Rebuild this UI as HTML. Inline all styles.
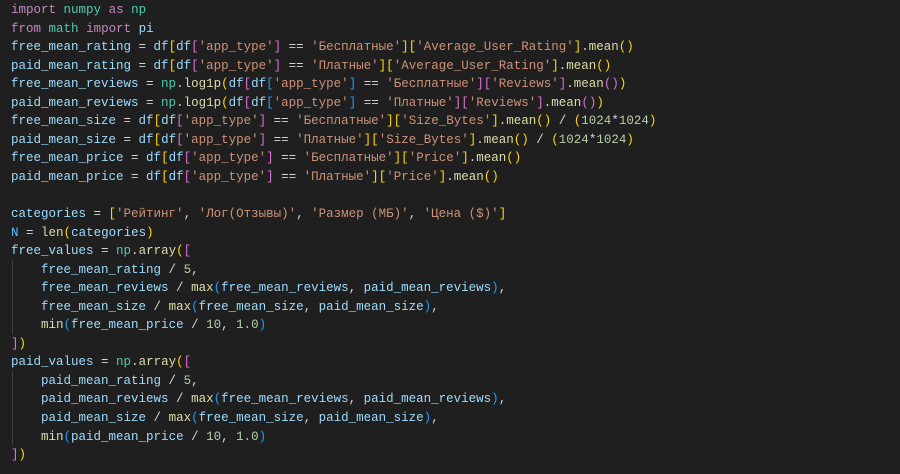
<!DOCTYPE html>
<html><head><meta charset="utf-8"><style>
html,body{margin:0;padding:0;background:#1f1f1f;width:900px;height:474px;overflow:hidden}
pre{margin:0;position:absolute;left:11px;top:1px;font-family:"Liberation Mono","DejaVu Sans Mono",monospace;font-size:12.5px;line-height:18.55px;color:#d4d4d4;white-space:pre}
.k{color:#c586c0}.m{color:#4ec9b0}.v{color:#9cdcfe}.s{color:#ce9178}.f{color:#dcdcaa}.n{color:#b5cea8}.c{color:#4fc1ff}
.b1{color:#ffd700}.b2{color:#da70d6}.b3{color:#179fff}
.g{position:absolute;left:12px;width:1px;background:#404040}
</style></head><body>
<div class="g" style="top:260px;height:74px"></div>
<div class="g" style="top:371px;height:74px"></div>
<pre><span class="k">import</span> <span class="m">numpy</span> <span class="k">as</span> <span class="m">np</span>
<span class="k">from</span> <span class="m">math</span> <span class="k">import</span> <span class="v">pi</span>
<span class="v">free_mean_rating</span> = <span class="v">df</span><span class="b1">[</span><span class="v">df</span><span class="b2">[</span><span class="s">'app_type'</span><span class="b2">]</span> == <span class="s">'Бесплатные'</span><span class="b1">][</span><span class="s">'Average_User_Rating'</span><span class="b1">]</span>.<span class="f">mean</span><span class="b1">()</span>
<span class="v">paid_mean_rating</span> = <span class="v">df</span><span class="b1">[</span><span class="v">df</span><span class="b2">[</span><span class="s">'app_type'</span><span class="b2">]</span> == <span class="s">'Платные'</span><span class="b1">][</span><span class="s">'Average_User_Rating'</span><span class="b1">]</span>.<span class="f">mean</span><span class="b1">()</span>
<span class="v">free_mean_reviews</span> = <span class="m">np</span>.<span class="f">log1p</span><span class="b1">(</span><span class="v">df</span><span class="b2">[</span><span class="v">df</span><span class="b3">[</span><span class="s">'app_type'</span><span class="b3">]</span> == <span class="s">'Бесплатные'</span><span class="b2">][</span><span class="s">'Reviews'</span><span class="b2">]</span>.<span class="f">mean</span><span class="b2">()</span><span class="b1">)</span>
<span class="v">paid_mean_reviews</span> = <span class="m">np</span>.<span class="f">log1p</span><span class="b1">(</span><span class="v">df</span><span class="b2">[</span><span class="v">df</span><span class="b3">[</span><span class="s">'app_type'</span><span class="b3">]</span> == <span class="s">'Платные'</span><span class="b2">][</span><span class="s">'Reviews'</span><span class="b2">]</span>.<span class="f">mean</span><span class="b2">()</span><span class="b1">)</span>
<span class="v">free_mean_size</span> = <span class="v">df</span><span class="b1">[</span><span class="v">df</span><span class="b2">[</span><span class="s">'app_type'</span><span class="b2">]</span> == <span class="s">'Бесплатные'</span><span class="b1">][</span><span class="s">'Size_Bytes'</span><span class="b1">]</span>.<span class="f">mean</span><span class="b1">()</span> / <span class="b1">(</span><span class="n">1024</span>*<span class="n">1024</span><span class="b1">)</span>
<span class="v">paid_mean_size</span> = <span class="v">df</span><span class="b1">[</span><span class="v">df</span><span class="b2">[</span><span class="s">'app_type'</span><span class="b2">]</span> == <span class="s">'Платные'</span><span class="b1">][</span><span class="s">'Size_Bytes'</span><span class="b1">]</span>.<span class="f">mean</span><span class="b1">()</span> / <span class="b1">(</span><span class="n">1024</span>*<span class="n">1024</span><span class="b1">)</span>
<span class="v">free_mean_price</span> = <span class="v">df</span><span class="b1">[</span><span class="v">df</span><span class="b2">[</span><span class="s">'app_type'</span><span class="b2">]</span> == <span class="s">'Бесплатные'</span><span class="b1">][</span><span class="s">'Price'</span><span class="b1">]</span>.<span class="f">mean</span><span class="b1">()</span>
<span class="v">paid_mean_price</span> = <span class="v">df</span><span class="b1">[</span><span class="v">df</span><span class="b2">[</span><span class="s">'app_type'</span><span class="b2">]</span> == <span class="s">'Платные'</span><span class="b1">][</span><span class="s">'Price'</span><span class="b1">]</span>.<span class="f">mean</span><span class="b1">()</span>

<span class="v">categories</span> = <span class="b1">[</span><span class="s">'Рейтинг'</span>, <span class="s">'Лог(Отзывы)'</span>, <span class="s">'Размер (МБ)'</span>, <span class="s">'Цена ($)'</span><span class="b1">]</span>
<span class="c">N</span> = <span class="f">len</span><span class="b1">(</span><span class="v">categories</span><span class="b1">)</span>
<span class="v">free_values</span> = <span class="m">np</span>.<span class="f">array</span><span class="b1">(</span><span class="b2">[</span>
    <span class="v">free_mean_rating</span> / <span class="n">5</span>,
    <span class="v">free_mean_reviews</span> / <span class="f">max</span><span class="b3">(</span><span class="v">free_mean_reviews</span>, <span class="v">paid_mean_reviews</span><span class="b3">)</span>,
    <span class="v">free_mean_size</span> / <span class="f">max</span><span class="b3">(</span><span class="v">free_mean_size</span>, <span class="v">paid_mean_size</span><span class="b3">)</span>,
    <span class="f">min</span><span class="b3">(</span><span class="v">free_mean_price</span> / <span class="n">10</span>, <span class="n">1.0</span><span class="b3">)</span>
<span class="b2">]</span><span class="b1">)</span>
<span class="v">paid_values</span> = <span class="m">np</span>.<span class="f">array</span><span class="b1">(</span><span class="b2">[</span>
    <span class="v">paid_mean_rating</span> / <span class="n">5</span>,
    <span class="v">paid_mean_reviews</span> / <span class="f">max</span><span class="b3">(</span><span class="v">free_mean_reviews</span>, <span class="v">paid_mean_reviews</span><span class="b3">)</span>,
    <span class="v">paid_mean_size</span> / <span class="f">max</span><span class="b3">(</span><span class="v">free_mean_size</span>, <span class="v">paid_mean_size</span><span class="b3">)</span>,
    <span class="f">min</span><span class="b3">(</span><span class="v">paid_mean_price</span> / <span class="n">10</span>, <span class="n">1.0</span><span class="b3">)</span>
<span class="b2">]</span><span class="b1">)</span></pre>
</body></html>
